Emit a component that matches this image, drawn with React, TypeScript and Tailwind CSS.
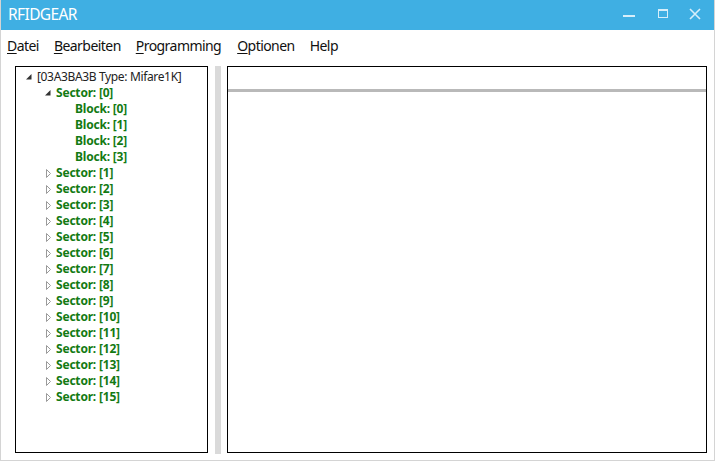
import React from "react";

const font = { fontFamily: '"Noto Sans", "Open Sans", sans-serif' };

function ExpandedArrow() {
  return (
    <svg width="16" height="16" viewBox="0 0 16 16" className="shrink-0">
      <path d="M10.5 5 L10.5 10.5 L5 10.5 Z" fill="#333333" />
    </svg>
  );
}

function CollapsedArrow() {
  return (
    <svg width="16" height="16" viewBox="0 0 16 16" className="shrink-0">
      <path d="M6.5 4.5 L10.5 8.5 L6.5 12.5 Z" fill="none" stroke="#9a9a9a" strokeWidth="1" />
    </svg>
  );
}

function Spacer() {
  return <div className="w-[16px] shrink-0" />;
}

export default function App() {
  const sectors = Array.from({ length: 15 }, (_, i) => i + 1);
  return (
    <div
      className="w-[715px] h-[461px] flex flex-col bg-white border-x border-b border-[#d4d4d4] overflow-hidden"
      style={font}
    >
      {/* Title bar */}
      <div className="h-[30px] shrink-0 bg-[#3fafe3] flex items-center">
        <div className="pl-[7px] text-white text-[15.5px] leading-none tracking-[-0.6px]">RFIDGEAR</div>
        <div className="ml-auto flex items-center h-full">
          <div className="w-[42px] h-full flex items-center justify-center">
            <div className="w-[12px] h-[2px] bg-[#d6eefa] mt-[2px]" />
          </div>
          <div className="w-[26px] h-full flex items-center justify-center">
            <div className="w-[10px] h-[9px] border border-[#d6eefa] border-t-[2px] mb-[4px]" />
          </div>
          <div className="w-[38px] h-full flex items-center justify-center">
            <svg width="12" height="12" viewBox="0 0 12 12" className="mb-[3px]">
              <path d="M1 1 L11 11 M11 1 L1 11" stroke="#d6eefa" strokeWidth="1.6" />
            </svg>
          </div>
        </div>
      </div>

      {/* Menu bar */}
      <div className="h-[30px] shrink-0 flex items-center text-[14px] text-[#111] pl-[6px] tracking-[-0.55px]">
        <span className="mr-[15px]"><span className="underline underline-offset-2">D</span>atei</span>
        <span className="mr-[15px]"><span className="underline underline-offset-2">B</span>earbeiten</span>
        <span className="mr-[16px]"><span className="underline underline-offset-2">P</span>rogramming</span>
        <span className="mr-[15px]"><span className="underline underline-offset-2">O</span>ptionen</span>
        <span>Help</span>
      </div>

      {/* Main */}
      <div className="flex-1 flex pt-[6px] pl-[14px] pr-[7px] pb-[7px]">
        <div className="w-[193px] shrink-0 border border-black bg-white pt-[1px] text-[12px]">
          <div className="h-[17px] flex items-center pl-[5px]">
            <ExpandedArrow />
            <span className="text-[#222] tracking-[-0.35px]">[03A3BA3B Type: Mifare1K]</span>
          </div>
          <div className="h-[16px] flex items-center pl-[24px]">
            <ExpandedArrow />
            <span className="text-[#137a13] font-bold tracking-[-0.2px]">Sector: [0]</span>
          </div>
          {[0, 1, 2, 3].map((b) => (
            <div key={b} className="h-[16px] flex items-center pl-[43px]">
              <Spacer />
              <span className="text-[#137a13] font-bold tracking-[-0.2px]">Block: [{b}]</span>
            </div>
          ))}
          {sectors.map((s) => (
            <div key={s} className="h-[16px] flex items-center pl-[24px]">
              <CollapsedArrow />
              <span className="text-[#137a13] font-bold tracking-[-0.2px]">Sector: [{s}]</span>
            </div>
          ))}
        </div>
        <div className="w-[7px] shrink-0" />
        <div className="w-[6px] shrink-0 bg-[#dadada] mb-[-1px]" />
        <div className="w-[6px] shrink-0" />
        <div className="flex-1 border border-black bg-white flex flex-col">
          <div className="h-[22px] shrink-0" />
          <div className="h-[3px] shrink-0 bg-[#b9b9b9]" />
        </div>
      </div>
    </div>
  );
}
